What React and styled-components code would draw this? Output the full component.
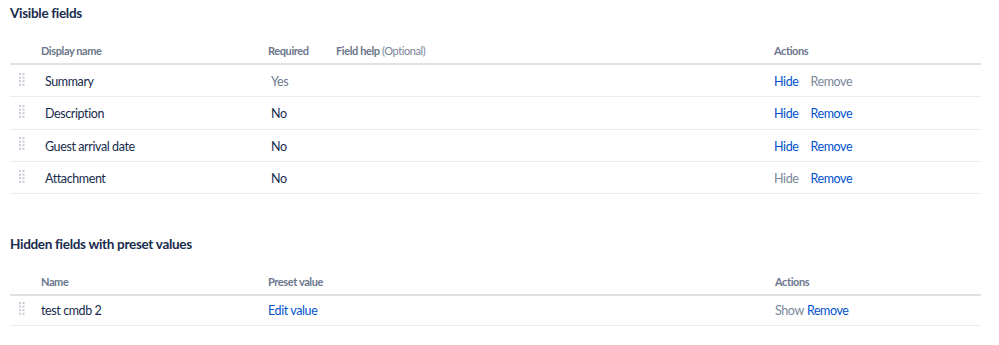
import React from 'react'
import styled, { createGlobalStyle } from 'styled-components'

const GlobalStyle = createGlobalStyle`
  html, body {
    margin: 0;
    padding: 0;
    background: #ffffff;
  }
  body {
    font-family: Lato, 'Open Sans', 'Liberation Sans', sans-serif;
    color: #172b4d;
  }
`

const Page = styled.div`
  width: 999px;
  padding: 0 18px 0 10px;
  box-sizing: border-box;
`

const Section = styled.section`
  & + & {
    margin-top: 37px;
  }
`

const SectionTitle = styled.h3`
  margin: 0;
  font-size: 13.5px;
  font-weight: 700;
  letter-spacing: -0.3px;
  line-height: 26px;
  color: #172b4d;
`

const Table = styled.div`
  margin-top: 11px;
  display: flex;
  flex-direction: column;
`

const Row = styled.div`
  display: grid;
  grid-template-columns: ${p => p.$cols};
  align-items: center;
  height: ${p => p.$h}px;
  box-sizing: border-box;
  padding-top: ${p => p.$pt || 0}px;
  border-bottom: 1.5px solid #ebecf0;
`

const HeadRow = styled(Row)`
  height: 28px;
  align-items: end;
  padding-top: 0;
  padding-bottom: 6px;
  border-bottom: 2px solid #dfe1e6;
`

const HeadCell = styled.div`
  font-size: 11px;
  font-weight: 700;
  letter-spacing: -0.4px;
  color: #6b778c;
  white-space: nowrap;
  span {
    font-weight: 400;
    color: #7a869a;
  }
`

const Cell = styled.div`
  font-size: 12.5px;
  letter-spacing: -0.4px;
  color: #172b4d;
  padding-left: ${p => p.$inset || 0}px;
  white-space: nowrap;
`

const Muted = styled.span`
  color: #6b778c;
`

const Actions = styled.div`
  display: flex;
  gap: ${p => p.$gap}px;
  font-size: 12.5px;
  letter-spacing: -0.4px;
`

const Action = styled.a`
  color: ${p => (p.$disabled ? '#7a869a' : '#0052cc')};
  text-decoration: none;
  cursor: ${p => (p.$disabled ? 'default' : 'pointer')};
`

const Handle = styled.div`
  padding-left: 9px;
  display: flex;
  margin-top: -4px;
`

const DragHandle = () => (
  <Handle>
    <svg width="6" height="14" viewBox="0 0 6 14">
      {[0, 1, 2, 3].map(r =>
        [0, 1].map(c => (
          <rect key={`${r}-${c}`} x={c * 3.5} y={r * 3.6} width="2" height="2" fill="#c8ccd4" />
        ))
      )}
    </svg>
  </Handle>
)

const visibleCols = '31px 227px 68px 438px 1fr'
const hiddenCols = '31px 227px 507px 1fr'

const visibleFields = [
  { name: 'Summary', required: 'Yes', hide: true, remove: false },
  { name: 'Description', required: 'No', hide: true, remove: true },
  { name: 'Guest arrival date', required: 'No', hide: true, remove: true },
  { name: 'Attachment', required: 'No', hide: false, remove: true },
]

const App = () => {
  return (
    <Page>
      <GlobalStyle />
      <Section>
        <SectionTitle>Visible fields</SectionTitle>
        <Table>
          <HeadRow $cols={visibleCols}>
            <div />
            <HeadCell>Display name</HeadCell>
            <HeadCell>Required</HeadCell>
            <HeadCell>
              Field help <span>(Optional)</span>
            </HeadCell>
            <HeadCell>Actions</HeadCell>
          </HeadRow>
          {visibleFields.map(f => (
            <Row key={f.name} $cols={visibleCols} $h={32.3} $pt={2}>
              <DragHandle />
              <Cell $inset={4}>{f.name}</Cell>
              <Cell $inset={3}>
                {f.required === 'Yes' ? <Muted>Yes</Muted> : f.required}
              </Cell>
              <Cell />
              <Actions $gap={12}>
                <Action $disabled={!f.hide}>Hide</Action>
                <Action $disabled={!f.remove}>Remove</Action>
              </Actions>
            </Row>
          ))}
        </Table>
      </Section>

      <Section>
        <SectionTitle>Hidden fields with preset values</SectionTitle>
        <Table>
          <HeadRow $cols={hiddenCols}>
            <div />
            <HeadCell>Name</HeadCell>
            <HeadCell>Preset value</HeadCell>
            <HeadCell>Actions</HeadCell>
          </HeadRow>
          <Row $cols={hiddenCols} $h={30}>
            <DragHandle />
            <Cell>test cmdb 2</Cell>
            <Cell>
              <Action>Edit value</Action>
            </Cell>
            <Actions $gap={3}>
              <Action $disabled>Show</Action>
              <Action>Remove</Action>
            </Actions>
          </Row>
        </Table>
      </Section>
    </Page>
  )
}

export default App
